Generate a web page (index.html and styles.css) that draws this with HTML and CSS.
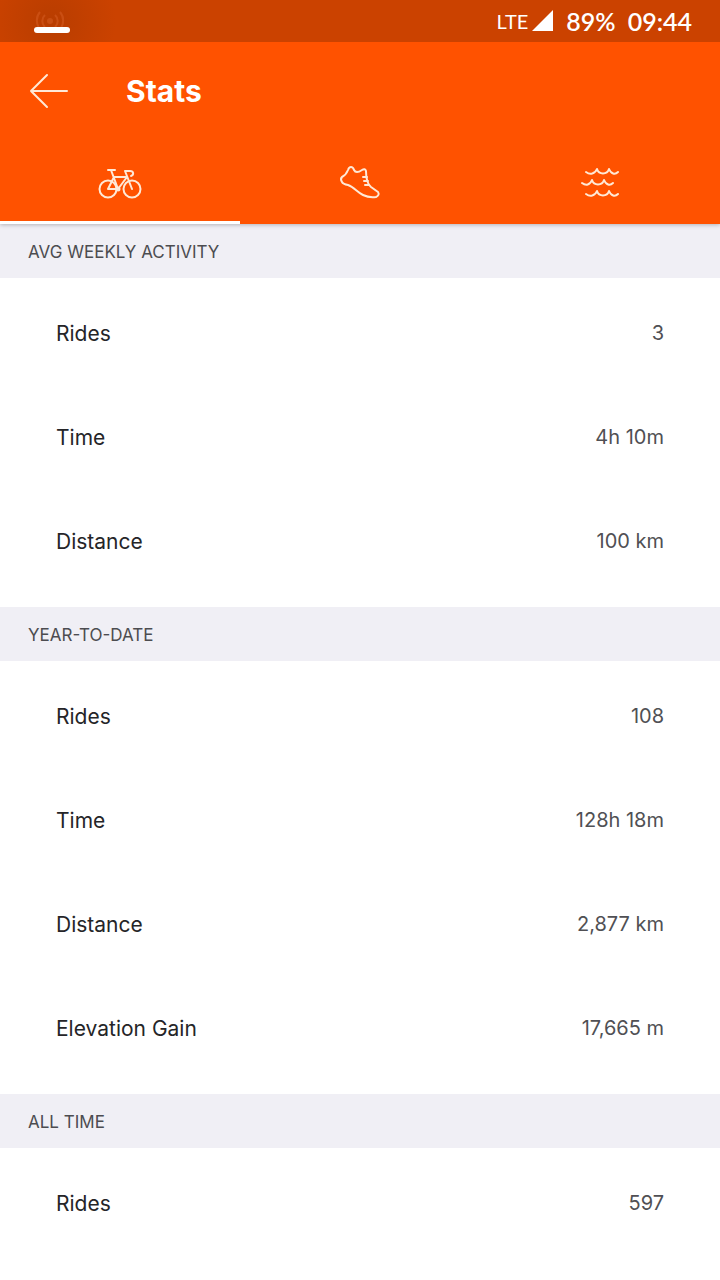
FILE: index.html
```html
<!DOCTYPE html>
<html lang="en">
<head>
    <meta charset="UTF-8">
    <meta name="viewport" content="width=device-width, initial-scale=1.0">
    <title>Stats</title>
    <link rel="stylesheet" href="styles.css">
</head>
<body>
    <header class="app-header">
        <div class="status-bar">
            <div class="status-left">
                <svg class="cast-icon" viewBox="0 0 36 20" fill="none" stroke="#e0682f" stroke-width="2" aria-hidden="true">
                    <circle cx="16" cy="14" r="3" fill="#e0682f" stroke="none"/>
                    <path d="M11 20a8 8 0 0 1 0-12M21 20a8 8 0 0 0 0-12M6 22a13 13 0 0 1 0-17M26 22a13 13 0 0 0 0-17"/>
                </svg>
                <span class="status-handle"></span>
            </div>
            <div class="status-right">
                <span class="network">LTE</span>
                <svg class="signal-icon" viewBox="0 0 22 22" aria-hidden="true">
                    <path d="M21 0v21H0z" fill="#fff"/>
                </svg>
                <span class="battery">89%</span>
                <span class="clock">09:44</span>
            </div>
        </div>

        <div class="toolbar">
            <button class="back-button" aria-label="Back">
                <svg width="40" height="36" viewBox="0 0 40 36" fill="none" stroke="#ffe9d6" stroke-width="2" stroke-linecap="round" stroke-linejoin="round">
                    <path d="M38 18H2M18 2L2 18l16 16"/>
                </svg>
            </button>
            <h1>Stats</h1>
        </div>

        <nav class="tabs">
            <button class="tab active" aria-label="Ride">
                <svg width="44" height="32" viewBox="0 0 44 32" fill="none" stroke="#ffe9d6" stroke-width="2" stroke-linecap="round" stroke-linejoin="round">
                    <circle cx="10" cy="22" r="8.500"/>
                    <circle cx="34" cy="22" r="8.500"/>
                    <path d="M10 3h7M13 3l7 19H10l6-12h13l-9 12M34 22L27 4h5c4 0 4 4 1 5"/>
                    <circle cx="20" cy="22" r="1.500"/>
                </svg>
            </button>
            <button class="tab" aria-label="Run">
                <svg width="44" height="36" viewBox="0 0 44 36" fill="none" stroke="#ffe9d6" stroke-width="2" stroke-linecap="round" stroke-linejoin="round">
                    <path d="M13 2Q11 2 10 5Q8 10 4 12Q2 14 4 17Q5 19 10 20C16 22 19 27 25 30Q31 33 38 32Q42 30 40 27L33 22Q28 18 28 6Q27 3 24 5Q18 9 16 5Q15 2 13 2Z"/>
                    <path d="M29 12h-4M30 16h-4M31 20h-4"/>
                </svg>
            </button>
            <button class="tab" aria-label="Swim">
                <svg width="40" height="32" viewBox="0 0 40 32" fill="none" stroke="#ffe9d6" stroke-width="2" stroke-linecap="round" stroke-linejoin="round">
                    <path d="M6 5c4 3 9 2 11-3c2 6 10 6 12 0c2 5 6 6 9 3M2 16c4 3 8 2 10-3c2 6 10 6 12 0c2 5 6 6 9 3M6 27c4 3 9 2 11-3c2 6 10 6 12 0c2 5 6 6 9 3"/>
                </svg>
            </button>
        </nav>
    </header>

    <main>
        <section>
            <h2>AVG WEEKLY ACTIVITY</h2>
            <dl class="stats">
                <div class="stat"><dt>Rides</dt><dd>3</dd></div>
                <div class="stat"><dt>Time</dt><dd>4h 10m</dd></div>
                <div class="stat"><dt>Distance</dt><dd>100 km</dd></div>
            </dl>
        </section>

        <section>
            <h2>YEAR-TO-DATE</h2>
            <dl class="stats">
                <div class="stat"><dt>Rides</dt><dd>108</dd></div>
                <div class="stat"><dt>Time</dt><dd>128h 18m</dd></div>
                <div class="stat"><dt>Distance</dt><dd>2,877 km</dd></div>
                <div class="stat"><dt>Elevation Gain</dt><dd>17,665 m</dd></div>
            </dl>
        </section>

        <section>
            <h2>ALL TIME</h2>
            <dl class="stats">
                <div class="stat"><dt>Rides</dt><dd>597</dd></div>
            </dl>
        </section>
    </main>
</body>
</html>
```
FILE: styles.css
```css
* {
    box-sizing: border-box;
}
body {
    margin: 0;
    font-family: Inter, "Liberation Sans", sans-serif;
    background-color: #fff;
    color: #252528;
}
button {
    padding: 0;
    border: none;
    background: none;
    cursor: pointer;
}
svg {
    display: block;
}

/* Header */
.app-header {
    position: relative;
    background-color: #ff5200;
    color: #fff;
    box-shadow: 0 1px 4px rgba(0, 0, 0, 0.25);
}
.status-bar {
    display: flex;
    justify-content: space-between;
    height: 42px;
    padding: 0 28px 0 34px;
    background: radial-gradient(circle at 52px 22px, #b83d00, #cb4200 64px);
}
.status-left {
    display: flex;
    flex-direction: column;
    padding-top: 7px;
}
.cast-icon {
    width: 36px;
    height: 20px;
    opacity: 0.4;
}
.status-handle {
    width: 36px;
    height: 6px;
    border-radius: 3px;
    background-color: #fff;
}
.status-right {
    display: flex;
    align-items: center;
    font-family: Lato, sans-serif;
    font-size: 25px;
    font-weight: 600;
}
.network {
    font-size: 20px;
    font-weight: normal;
}
.signal-icon {
    width: 22px;
    height: 22px;
    margin: 0 12px 0 4px;
}
.clock {
    margin-left: 12px;
}
.toolbar {
    display: flex;
    align-items: center;
    height: 98px;
    padding: 0 29px;
}
.back-button {
    margin-right: 57px;
}
h1 {
    margin: 0;
    font-size: 30px;
    font-weight: bold;
}
.tabs {
    display: flex;
    height: 84px;
}
.tab {
    flex: 1;
    display: flex;
    align-items: center;
    justify-content: center;
    padding-top: 4px;
    border-bottom: 3px solid transparent;
}
.tab.active {
    border-bottom-color: #fff;
}

/* Stats list */
h2 {
    margin: 0;
    padding: 2px 28px 0;
    background-color: #f0eff5;
    color: #4c4c50;
    font-size: 17px;
    font-weight: normal;
    line-height: 52px;
}
.stats {
    margin: 0;
    padding: 3px 56px 14px;
}
.stat {
    display: flex;
    align-items: center;
    justify-content: space-between;
    height: 104px;
    font-size: 21px;
}
dd {
    margin: 0;
    color: #505054;
    font-size: 20px;
}
```
